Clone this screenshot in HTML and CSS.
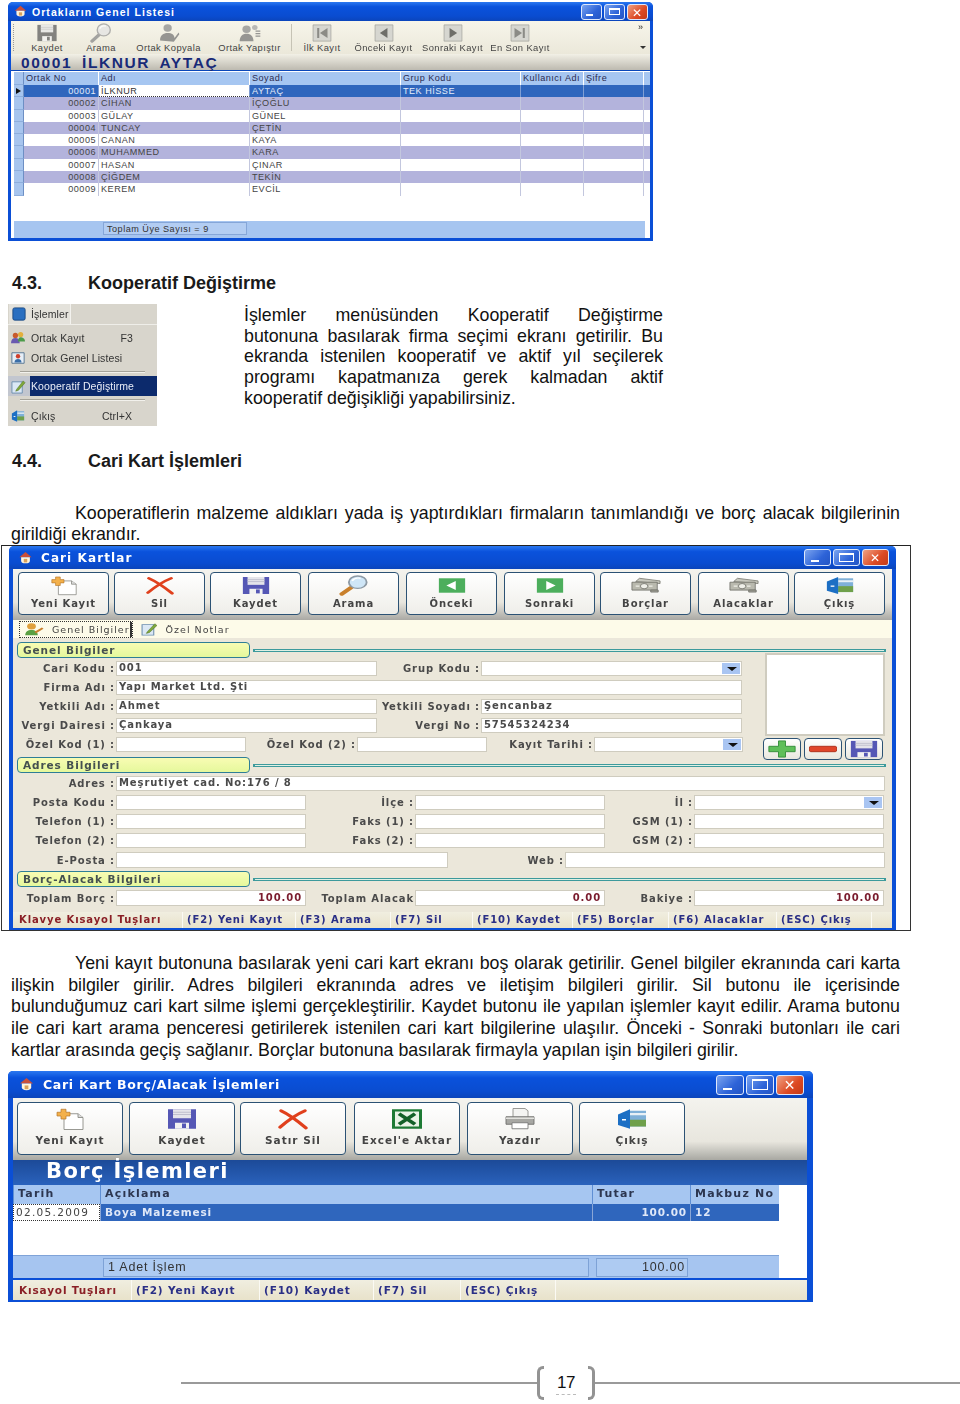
FILE: index.html
```html
<!DOCTYPE html>
<html lang="tr">
<head>
<meta charset="utf-8">
<title>Kooperatif</title>
<link rel="stylesheet" href="styles.css">
</head>
<body>
<svg class="defs" aria-hidden="true">
  <symbol id="i-save" viewBox="0 0 32 32" preserveAspectRatio="none"><path d="M2 3h28v26H2z" fill="#5557b5"/><path d="M7 3h18v12H7z" fill="#e4e4ea"/><path d="M7 7h18M7 10h18" stroke="#b9b9c9"/><path d="M9 21h14v8H9z" fill="#f2f2f2"/><path d="M16 22h4v6h-4z" fill="#5557b5"/></symbol>
  <symbol id="i-new" viewBox="0 0 32 32" preserveAspectRatio="none"><path d="M10 9h14l5 5v16H10z" fill="#fff" stroke="#8a8a84"/><path d="M24 9v5h5" fill="#ddd" stroke="#8a8a84"/><path d="M7 3h5v4h4v5h-4v4H7v-4H3V7h4z" fill="#f3b04a" stroke="#b5762a" stroke-width=".8"/></symbol>
  <symbol id="i-del" viewBox="0 0 32 32" preserveAspectRatio="none"><path d="M4 5c8 5 17 14 25 23M28 5C19 10 10 19 3 27" fill="none" stroke="#e0401c" stroke-width="3.6" stroke-linecap="round"/></symbol>
  <symbol id="i-find" viewBox="0 0 32 32" preserveAspectRatio="none"><path d="M13 19L3 29" stroke="#c9802c" stroke-width="5" stroke-linecap="round"/><circle cx="20" cy="11" r="9.5" fill="#cfe6f7" stroke="#8e9aa5" stroke-width="2"/><path d="M14 9c2-4 6-5 9-4" fill="none" stroke="#fff" stroke-width="2"/></symbol>
  <symbol id="i-prev" viewBox="0 0 32 32" preserveAspectRatio="none"><path d="M2 5h28v22H2z" fill="#4cae5c"/><path d="M20 9v14l-10-7z" fill="#fff"/></symbol>
  <symbol id="i-next" viewBox="0 0 32 32" preserveAspectRatio="none"><path d="M2 5h28v22H2z" fill="#4cae5c"/><path d="M12 9v14l10-7z" fill="#fff"/></symbol>
  <symbol id="i-money" viewBox="0 0 32 32" preserveAspectRatio="none"><path d="M5 10L9 5l22 4v4z" fill="#c9c9bf" stroke="#77776f"/><path d="M1 11h27v12H1z" fill="#b9b9ae" stroke="#6c6c64"/><circle cx="14" cy="17" r="4" fill="#efefe8" stroke="#6c6c64"/><path d="M5 17h4M19 17h4" stroke="#efefe8" stroke-width="2"/><path d="M21 23h8v3h-8z" fill="#a4a49a" stroke="#6c6c64"/></symbol>
  <symbol id="i-exit" viewBox="0 0 32 32" preserveAspectRatio="none"><path d="M14 5h16v21H14z" fill="#7fb0d8"/><path d="M14 17h16v9H14z" fill="#6fa04a"/><path d="M14 8h16v3H14z" fill="#e8f0f6"/><path d="M2 10l12-7v26L2 24z" fill="#1c6fc4"/><path d="M6 16h4v2H6z" fill="#fff"/></symbol>
  <symbol id="i-xls" viewBox="0 0 32 32" preserveAspectRatio="none"><path d="M1 3h30v26H1z" fill="#1d7a34"/><path d="M4 6h24v20H4z" fill="#e9f3e6"/><path d="M8 9l16 14M24 9L8 23" stroke="#136128" stroke-width="4"/></symbol>
  <symbol id="i-print" viewBox="0 0 32 32" preserveAspectRatio="none"><path d="M9 2h12l3 3v9H9z" fill="#f4f4f2" stroke="#8c8c88"/><path d="M2 13h28v10H2z" fill="#a7a7a3" stroke="#6d6d69"/><path d="M2 15h28" stroke="#e2e2de" stroke-width="2"/><path d="M8 21h16v8H8z" fill="#fff" stroke="#777"/></symbol>
  <symbol id="i-home" viewBox="0 0 16 16"><path d="M8 1l7 6H1z" fill="#c94f3a"/><path d="M3 7h10v4a5 3 0 0 1-10 0z" fill="#fff4dc"/><path d="M6 9h4v4H6z" fill="#d9a15a"/></symbol>
  <symbol id="i-plus" viewBox="0 0 32 20" preserveAspectRatio="none"><path d="M12 1h8v6h11v6H20v6h-8v-6H1V7h11z" fill="#5fbf5a" stroke="#2f8a36"/></symbol>
  <symbol id="i-minus" viewBox="0 0 32 20" preserveAspectRatio="none"><path d="M2 7h28a2 3 0 0 1 0 6H2a2 3 0 0 1 0-6z" fill="#e0452a" stroke="#a82a16"/></symbol>
  <symbol id="i-person" viewBox="0 0 32 32" preserveAspectRatio="none"><circle cx="14" cy="8" r="6" fill="#8c8c84"/><path d="M3 28c0-9 5-12 11-12s10 3 10 8l6-9 1 3-8 12z" fill="#77776f"/></symbol>
  <symbol id="i-persons" viewBox="0 0 32 32" preserveAspectRatio="none"><circle cx="11" cy="10" r="6" fill="#8c8c84"/><path d="M1 29c0-8 4-12 10-12s10 4 10 12z" fill="#77776f"/><circle cx="23" cy="7" r="4" fill="#a4a49c"/><path d="M24 13h7M24 17h7M24 21h7" stroke="#77776f" stroke-width="2"/></symbol>
  <symbol id="i-first" viewBox="0 0 32 32" preserveAspectRatio="none"><path d="M3 3h26v26H3z" fill="#d6d6d0" stroke="#9c9c96"/><path d="M9 8h3v16H9zM24 8v16L13 16z" fill="#8b8b86"/></symbol>
  <symbol id="i-back" viewBox="0 0 32 32" preserveAspectRatio="none"><path d="M3 3h26v26H3z" fill="#d6d6d0" stroke="#9c9c96"/><path d="M21 8v16L10 16z" fill="#6e6e69"/></symbol>
  <symbol id="i-fwd" viewBox="0 0 32 32" preserveAspectRatio="none"><path d="M3 3h26v26H3z" fill="#d6d6d0" stroke="#9c9c96"/><path d="M11 8v16l11-8z" fill="#6e6e69"/></symbol>
  <symbol id="i-last" viewBox="0 0 32 32" preserveAspectRatio="none"><path d="M3 3h26v26H3z" fill="#d6d6d0" stroke="#9c9c96"/><path d="M20 8h3v16h-3zM8 8v16l11-8z" fill="#8b8b86"/></symbol>
  <symbol id="i-module" viewBox="0 0 16 16"><rect x="1" y="1" width="14" height="14" rx="2" fill="#2a6fc0" stroke="#17467f"/></symbol>
  <symbol id="i-card" viewBox="0 0 16 16"><path d="M1 2h14v12H1z" fill="#e6eef6" stroke="#4d6e8e"/><circle cx="8" cy="6" r="2.5" fill="#d0402c"/><path d="M4 13c0-3 2-4 4-4s4 1 4 4z" fill="#3a6ea8"/></symbol>
  <symbol id="i-people" viewBox="0 0 16 16"><circle cx="5" cy="5" r="3" fill="#c95a2c"/><path d="M0 14c0-4 2-6 5-6s5 2 5 6z" fill="#6a5ab0"/><circle cx="11" cy="4" r="3" fill="#e3b03c"/><path d="M8 12c0-3 1-5 3-5s5 1 5 5z" fill="#4c9c4a"/></symbol>
  <symbol id="i-note" viewBox="0 0 16 16" preserveAspectRatio="none"><path d="M1 3h11v12H1z" fill="#dbe8f5" stroke="#6d8fb0"/><path d="M6 11l7-9 2 2-7 8-3 1z" fill="#7fa83a" stroke="#4a6a1e" stroke-width=".5"/></symbol>
  <symbol id="i-user" viewBox="0 0 16 16" preserveAspectRatio="none"><circle cx="6" cy="5" r="3.5" fill="#e0a03c"/><path d="M1 15c0-4 2-6 5-6s5 2 5 6z" fill="#5aa043"/><path d="M9 12l6-5" stroke="#c9802c" stroke-width="2"/></symbol>
</svg>

<main class="page">
  <section class="win w1 soft">
    <header class="title t1">
      <svg class="ti"><use href="#i-home"/></svg><span class="title-text">Ortakların Genel Listesi</span>
      <div class="caps"><span class="cap cap-min"></span><span class="cap cap-max"></span><span class="cap cap-x"></span></div>
    </header>
    <div class="w1-tools">
      <div class="grip"></div>
      <div class="tool tw54"><svg class="dis"><use href="#i-save"/></svg><span>Kaydet</span></div>
      <div class="tool tw54"><svg class="dis"><use href="#i-find"/></svg><span>Arama</span></div>
      <div class="tool tw80"><svg class="dis"><use href="#i-person"/></svg><span>Ortak Kopyala</span></div>
      <div class="tool tw80"><svg class="dis"><use href="#i-persons"/></svg><span>Ortak Yapıştır</span></div>
      <div class="sep"></div>
      <div class="tool tw54"><svg><use href="#i-first"/></svg><span>İlk Kayıt</span></div>
      <div class="tool tw68"><svg><use href="#i-back"/></svg><span>Önceki Kayıt</span></div>
      <div class="tool tw70"><svg><use href="#i-fwd"/></svg><span>Sonraki Kayıt</span></div>
      <div class="tool tw66"><svg><use href="#i-last"/></svg><span>En Son Kayıt</span></div>
      <div class="chev">»<i></i></div>
    </div>
    <div class="w1-name">00001 İLKNUR AYTAÇ</div>
    <div class="w1-grid">
      <div class="gr gh"><b class="ind hd"></b><b>Ortak No</b><b>Adı</b><b>Soyadı</b><b>Grup Kodu</b><b>Kullanıcı Adı</b><b>Şifre</b></div>
      <div class="gr sel"><b class="ind cur"></b><b class="num">00001</b><b class="focus">İLKNUR</b><b>AYTAÇ</b><b>TEK HİSSE</b><b></b><b></b></div>
      <div class="gr lav"><b class="ind"></b><b class="num">00002</b><b>CİHAN</b><b>İÇOĞLU</b><b></b><b></b><b></b></div>
      <div class="gr"><b class="ind"></b><b class="num">00003</b><b>GÜLAY</b><b>GÜNEL</b><b></b><b></b><b></b></div>
      <div class="gr lav"><b class="ind"></b><b class="num">00004</b><b>TUNCAY</b><b>ÇETİN</b><b></b><b></b><b></b></div>
      <div class="gr"><b class="ind"></b><b class="num">00005</b><b>CANAN</b><b>KAYA</b><b></b><b></b><b></b></div>
      <div class="gr lav"><b class="ind"></b><b class="num">00006</b><b>MUHAMMED</b><b>KARA</b><b></b><b></b><b></b></div>
      <div class="gr"><b class="ind"></b><b class="num">00007</b><b>HASAN</b><b>ÇINAR</b><b></b><b></b><b></b></div>
      <div class="gr lav"><b class="ind"></b><b class="num">00008</b><b>ÇİĞDEM</b><b>TEKİN</b><b></b><b></b><b></b></div>
      <div class="gr"><b class="ind"></b><b class="num">00009</b><b>KEREM</b><b>EVCİL</b><b></b><b></b><b></b></div>
    </div>
    <div class="w1-foot"><span class="w1-total">Toplam Üye Sayısı = 9</span></div>
  </section>

  <h2 class="head head-a"><span>4.3.</span>Kooperatif Değiştirme</h2>

  <div class="intro">
    <nav class="menu soft">
      <div class="m-top"><span class="m-box"><svg><use href="#i-module"/></svg>İşlemler</span></div>
      <div class="m-item"><svg><use href="#i-people"/></svg><span>Ortak Kayıt</span><em>F3</em></div>
      <div class="m-item"><svg><use href="#i-card"/></svg><span>Ortak Genel Listesi</span></div>
      <hr>
      <div class="m-item m-on"><svg><use href="#i-note"/></svg><span>Kooperatif Değiştirme</span></div>
      <hr>
      <div class="m-item"><svg><use href="#i-exit"/></svg><span>Çıkış</span><em>Ctrl+X</em></div>
    </nav>
    <p class="p-intro">
      <span class="ln">İşlemler menüsünden Kooperatif Değiştirme</span>
      <span class="ln">butonuna basılarak firma seçimi ekranı getirilir. Bu</span>
      <span class="ln">ekranda istenilen kooperatif ve aktif yıl seçilerek</span>
      <span class="ln">programı kapatmanıza gerek kalmadan aktif</span>
      <span class="ln last">kooperatif değişikliği yapabilirsiniz.</span>
    </p>
  </div>

  <h2 class="head head-b"><span>4.4.</span>Cari Kart İşlemleri</h2>

  <p class="para p-two">
    <span class="ln first">Kooperatiflerin malzeme aldıkları yada iş yaptırdıkları firmaların tanımlandığı ve borç alacak bilgilerinin</span>
    <span class="ln last">girildiği ekrandır.</span>
  </p>

  <div class="frame">
    <section class="win w2 soft">
      <header class="title t2">
        <svg class="ti"><use href="#i-home"/></svg><span class="title-text">Cari Kartlar</span>
        <div class="caps"><span class="cap cap-min"></span><span class="cap cap-max"></span><span class="cap cap-x"></span></div>
      </header>
      <div class="bar b2">
        <div class="btn"><svg><use href="#i-new"/></svg><span>Yeni Kayıt</span></div>
        <div class="btn"><svg><use href="#i-del"/></svg><span>Sil</span></div>
        <div class="btn"><svg><use href="#i-save"/></svg><span>Kaydet</span></div>
        <div class="btn gl"><svg><use href="#i-find"/></svg><span>Arama</span></div>
        <div class="btn gl"><svg><use href="#i-prev"/></svg><span>Önceki</span></div>
        <div class="btn gl"><svg><use href="#i-next"/></svg><span>Sonraki</span></div>
        <div class="btn"><svg><use href="#i-money"/></svg><span>Borçlar</span></div>
        <div class="btn gl"><svg><use href="#i-money"/></svg><span>Alacaklar</span></div>
        <div class="btn"><svg><use href="#i-exit"/></svg><span>Çıkış</span></div>
      </div>
      <div class="tabs">
        <span class="tab tab-on"><svg><use href="#i-user"/></svg>Genel Bilgiler</span>
        <span class="tab"><svg><use href="#i-note"/></svg>Özel Notlar</span>
      </div>
      <div class="form">
        <div class="sect"><span class="pill">Genel Bilgiler</span><i class="rule"></i></div>
        <div class="top">
          <div class="left">
            <div class="row"><label class="l98">Cari Kodu :</label><span class="in i261">001</span><label class="l103">Grup Kodu :</label><span class="in i261 dd"></span></div>
            <div class="row"><label class="l98">Firma Adı :</label><span class="in i626">Yapı Market Ltd. Şti</span></div>
            <div class="row"><label class="l98">Yetkili Adı :</label><span class="in i261">Ahmet</span><label class="l103">Yetkili Soyadı :</label><span class="in i261">Şencanbaz</span></div>
            <div class="row"><label class="l98">Vergi Dairesi :</label><span class="in i261">Çankaya</span><label class="l103">Vergi No :</label><span class="in i261">57545324234</span></div>
            <div class="row"><label class="l98">Özel Kod (1) :</label><span class="in i130"></span><label class="l106">Özel Kod (2) :</label><span class="in i130"></span><label class="l106b">Kayıt Tarihi :</label><span class="in i149 dd"></span></div>
          </div>
          <div class="right">
            <div class="pic"></div>
            <div class="mini">
              <span class="mb"><svg><use href="#i-plus"/></svg></span>
              <span class="mb"><svg><use href="#i-minus"/></svg></span>
              <span class="mb"><svg class="mdisk"><use href="#i-save"/></svg></span>
            </div>
          </div>
        </div>
        <div class="sect"><span class="pill">Adres Bilgileri</span><i class="rule"></i></div>
        <div class="addr">
          <div class="row"><label class="l98">Adres :</label><span class="in i769">Meşrutiyet cad. No:176 / 8</span></div>
          <div class="row"><label class="l98">Posta Kodu :</label><span class="in i190"></span><label class="l109">İlçe :</label><span class="in i190"></span><label class="l89">İl :</label><span class="in i190 dd"></span></div>
          <div class="row"><label class="l98">Telefon (1) :</label><span class="in i190"></span><label class="l109">Faks (1) :</label><span class="in i190"></span><label class="l89">GSM (1) :</label><span class="in i190"></span></div>
          <div class="row"><label class="l98">Telefon (2) :</label><span class="in i190"></span><label class="l109">Faks (2) :</label><span class="in i190"></span><label class="l89">GSM (2) :</label><span class="in i190"></span></div>
          <div class="row"><label class="l98">E-Posta :</label><span class="in i332"></span><label class="l117">Web :</label><span class="in i320"></span></div>
        </div>
        <div class="sect sect-c"><span class="pill">Borç-Alacak Bilgileri</span><i class="rule"></i></div>
        <div class="row row-t"><label class="l98">Toplam Borç :</label><span class="in i190 amt">100.00</span><label class="l109">Toplam Alacak</label><span class="in i190 amt">0.00</span><label class="l89">Bakiye :</label><span class="in i190 amt">100.00</span></div>
      </div>
      <footer class="status s2">
        <span class="key s168">Klavye Kısayol Tuşları</span>
        <span class="s113">(F2) Yeni Kayıt</span>
        <span class="s95">(F3) Arama</span>
        <span class="s82">(F7) Sil</span>
        <span class="s100">(F10) Kaydet</span>
        <span class="s96">(F5) Borçlar</span>
        <span class="s108">(F6) Alacaklar</span>
        <span class="s95">(ESC) Çıkış</span>
      </footer>
    </section>
  </div>

  <p class="para p-three">
    <span class="ln first">Yeni kayıt butonuna basılarak yeni cari kart ekranı boş olarak getirilir. Genel bilgiler ekranında cari karta</span>
    <span class="ln">ilişkin bilgiler girilir. Adres bilgileri ekranında adres ve iletişim bilgileri girilir. Sil butonu ile içerisinde</span>
    <span class="ln">bulunduğumuz cari kart silme işlemi gerçekleştirilir. Kaydet butonu ile yapılan işlemler kayıt edilir. Arama butonu</span>
    <span class="ln">ile cari kart arama penceresi getirilerek istenilen cari kart bilgilerine ulaşılır. Önceki - Sonraki butonları ile cari</span>
    <span class="ln last">kartlar arasında geçiş sağlanır. Borçlar butonuna basılarak firmayla yapılan işin bilgileri girilir.</span>
  </p>

  <section class="win w3 soft">
    <header class="title t3">
      <svg class="ti"><use href="#i-home"/></svg><span class="title-text">Cari Kart Borç/Alacak İşlemleri</span>
      <div class="caps"><span class="cap cap-min"></span><span class="cap cap-max"></span><span class="cap cap-x"></span></div>
    </header>
    <div class="bar b3">
      <div class="btn"><svg><use href="#i-new"/></svg><span>Yeni Kayıt</span></div>
      <div class="btn"><svg><use href="#i-save"/></svg><span>Kaydet</span></div>
      <div class="btn"><svg><use href="#i-del"/></svg><span>Satır Sil</span></div>
      <div class="btn"><svg><use href="#i-xls"/></svg><span>Excel'e Aktar</span></div>
      <div class="btn"><svg><use href="#i-print"/></svg><span>Yazdır</span></div>
      <div class="btn"><svg><use href="#i-exit"/></svg><span>Çıkış</span></div>
    </div>
    <div class="band">Borç İşlemleri</div>
    <div class="w3-grid">
      <div class="g3 g3-h"><b>Tarih</b><b>Açıklama</b><b>Tutar</b><b>Makbuz No</b></div>
      <div class="g3 g3-s"><b class="dot">02.05.2009</b><b>Boya Malzemesi</b><b class="num">100.00</b><b>12</b></div>
    </div>
    <div class="w3-foot">
      <div class="w3-sum"><span class="box b-486">1 Adet İşlem</span><span class="box b-92">100.00</span></div>
    </div>
    <footer class="status s3">
      <span class="key s117">Kısayol Tuşları</span>
      <span class="s128">(F2) Yeni Kayıt</span>
      <span class="s114">(F10) Kaydet</span>
      <span class="s87">(F7) Sil</span>
      <span class="s95">(ESC) Çıkış</span>
    </footer>
  </section>

  <footer class="pager">
    <i class="pline"></i>
    <span class="brk brk-l"></span>
    <span class="pnum">17</span>
    <span class="brk brk-r"></span>
    <i class="pline pline-r"></i>
  </footer>
</main>
</body>
</html>
```
FILE: styles.css
```css
* { box-sizing: border-box; }
html, body { margin: 0; padding: 0; background: #fff; }
body { font-family: "Liberation Sans", Arial, sans-serif; color: #111; }
.defs { position: absolute; width: 0; height: 0; }
.page { width: 960px; height: 1404px; overflow: hidden; }
.soft { filter: blur(0.4px); }

/* document text */
.head { margin: 0; font-size: 18px; line-height: 20px; font-weight: bold; color: #1a1a1a; padding-left: 12px; display: flex; }
.head span { width: 76px; }
.head-a { margin-top: 32px; }
.head-b { margin-top: 25px; }
.intro { display: flex; margin-top: 11px; height: 122px; padding-left: 8px; }
.p-intro { margin: 1px 0 0 87px; width: 419px; font-size: 17.8px; line-height: 20.7px; }
.para { margin: 0; font-size: 17.8px; margin-left: 11px; width: 889px; }
.ln { display: block; text-align: justify; text-align-last: justify; }
.ln.last { text-align-last: left; }
.ln.first { padding-left: 64px; }
.p-two { margin-top: 32px; line-height: 21px; }
.p-three { margin-top: 22px; line-height: 21.7px; }

/* shared window */
.win { background: #0b4fd6; border-radius: 5px 5px 0 0; display: flex; flex-direction: column; }
.w2, .w3 { font-family: "DejaVu Sans", sans-serif; }
.title { display: flex; align-items: center; color: #fff; font-weight: bold; background: linear-gradient(#2b78f0, #0a52dc 25%, #0a4cd0 75%, #0b45bb); border-radius: 5px 5px 0 0; flex: none; }
.ti { flex: none; }
.caps { margin-left: auto; display: flex; }
.cap { display: block; border: 1px solid #dfe8fb; border-radius: 3px; background: linear-gradient(135deg, #7ba4ef, #2d63d8 60%, #2455c4); position: relative; }
.cap-x { background: linear-gradient(135deg, #f0a283, #dd4a24 60%, #c43a18); }
.cap-min::after { content: ""; position: absolute; left: 22%; bottom: 20%; width: 35%; height: 2px; background: #fff; }
.cap-max::after { content: ""; position: absolute; left: 20%; right: 20%; top: 22%; bottom: 22%; border: 1px solid #fff; border-top-width: 2px; }
.cap-x::after { content: "✕"; position: absolute; inset: 0; color: #fff; text-align: center; font: bold 12px/16px "DejaVu Sans", sans-serif; }

/* window 1 */
.w1 { width: 645px; height: 239px; margin: 2px 0 0 8px; padding: 0 3px 3px; }
.t1 { height: 19px; margin: 0 -3px; padding: 0 5px 0 6px; font-size: 10.5px; letter-spacing: 1.05px; }
.t1 .ti { width: 13px; height: 13px; margin-right: 5px; }
.t1 .cap { width: 21px; height: 16px; margin-left: 2px; }
.w1-tools { height: 33px; flex: none; background: linear-gradient(#f7f5ea, #ebe8da); display: flex; align-items: stretch; padding-left: 2px; position: relative; }
.grip { width: 3px; margin: 3px 4px 3px 0; border-left: 1px dotted #999; }
.tool { flex: none; display: flex; flex-direction: column; align-items: center; font-size: 9.4px; letter-spacing: .4px; color: #444; padding-top: 2px; white-space: nowrap; }
.tool svg { width: 22px; height: 20px; flex: none; }
.tool span { margin-top: -1px; }
.tool .dis { filter: grayscale(1) opacity(.75); }
.tw54 { width: 54px; }
.tw66 { width: 66px; }
.tw68 { width: 69px; }
.tw70 { width: 69px; }
.tw80 { width: 81px; }
.sep { width: 1px; margin: 3px 3px 3px 1px; background: #c6c3b5; }
.chev { margin-left: auto; width: 12px; font-size: 9px; line-height: 12px; color: #222; position: relative; }
.chev i { position: absolute; bottom: 5px; left: 2px; border: 3px solid transparent; border-top-color: #333; border-bottom: 0; }
.w1-name { height: 17px; flex: none; background: linear-gradient(#f2f0e6, #bdbab0); border-bottom: 1px solid #0a47b9; color: #182a78; font-weight: bold; font-size: 15.5px; line-height: 17px; padding-left: 10px; letter-spacing: 1.6px; word-spacing: 4px; white-space: pre; }
.w1-grid { height: 150px; flex: none; background: #fff; padding: 1px 0 0 3px; }
.gr { display: grid; grid-template-columns: 10px 75px 151px 151px 120px 63px 60px; height: 12.3px; font-size: 9.1px; line-height: 12px; letter-spacing: .5px; color: #444; background: #fff; }
.gr b { font-weight: normal; padding-left: 2px; border-right: 1px solid #c3c7de; white-space: nowrap; overflow: hidden; }
.gr .ind { background: #a7c5ee; padding: 0; border-right: 1px solid #6d8fc4; border-bottom: 1px solid #8eaedc; }
.gr .num { text-align: right; padding-right: 2px; }
.gh { background: #a6c6f1; height: 13px; line-height: 13px; color: #2b2b50; }
.gh b { border-right: 1px solid #fff; }
.lav { background: #b3b3dc; }
.sel { background: #2f66bd; color: #e4ecfa; }
.sel b { border-right-color: #7f9ed4; }
.gr .focus { background: #fff; color: #333; border-bottom: 1px dotted #333; }
.cur { position: relative; }
.cur::after { content: ""; position: absolute; left: 2px; top: 3px; border: 3.5px solid transparent; border-left: 5px solid #111; border-right: 0; }
.w1-foot { height: 17px; flex: none; background: #a6c5f0; margin-left: 3px; margin-right: 5px; padding: 1px 0 0 89px; box-shadow: 5px 0 0 #fff, -3px 0 0 #fff; }
.w1-total { display: block; width: 144px; height: 13px; border: 1px solid #85a6d8; background: #b3cdf2; font-size: 9.1px; line-height: 12px; letter-spacing: .5px; padding-left: 3px; color: #333; }

/* menu */
.menu { width: 149px; height: 122px; background: #d8d5cc; font-size: 10.5px; letter-spacing: .1px; color: #333; }
.menu svg { width: 14px; height: 14px; flex: none; }
.m-top { height: 21px; border-bottom: 1px solid #efeee9; padding-left: 1px; margin-bottom: 3px; }
.m-box { display: flex; align-items: center; gap: 5px; width: 62px; height: 20px; background: #e4e2db; padding-left: 3px; border-right: 1px solid #f3f2ee; }
.m-item { display: flex; align-items: center; height: 20px; padding-left: 3px; gap: 6px; }
.m-item em { font-style: normal; margin-left: auto; padding-right: 24px; }
.menu hr { margin: 3px 12px; border: 0; border-top: 1px solid #a5a39a; border-bottom: 1px solid #f2f1ec; height: 2px; }
.menu hr:last-of-type { margin-bottom: 5px; }
.m-item:last-child em { padding-right: 25px; }
.m-on { padding-left: 0; gap: 5px; background: linear-gradient(90deg, #c2c6cf 0 22px, #0c2a6c 22px); color: #e8ecf6; }
.m-on svg { margin-left: 3px; width: 15px; height: 15px; }

/* frame and window 2 */
.frame { width: 910px; height: 386px; margin-left: 1px; border: 1px solid #333; border-top-color: #222; padding-left: 7px; background: #fff; }
.w2 { width: 887px; height: 384px; padding: 0 4px 3px; }
.t2 { height: 23px; margin: 0 -4px; padding: 0 7px 0 9px; font-size: 12px; letter-spacing: 1.1px; }
.t2 .ti { width: 15px; height: 14px; margin-right: 8px; }
.t2 .cap { width: 27px; height: 17px; margin-left: 2px; }
.bar { display: flex; flex: none; background: linear-gradient(#f4f3ee, #e8e6de 65%, #aaa9a4); }
.b2 { height: 51px; padding: 3px 0 0 5px; gap: 5px; }
.btn { flex: none; display: flex; flex-direction: column; align-items: center; border: 1px solid #2c5274; border-radius: 4px; background: linear-gradient(#fff, #efeee9); color: #444; font-weight: bold; white-space: nowrap; }
.b2 .btn { width: 91px; height: 43px; font-size: 10px; letter-spacing: .9px; padding-top: 2px; line-height: 13px; }
.b2 .btn svg { width: 30px; height: 21px; margin-bottom: 1px; }
.b2 .gl { margin-left: 2px; }
.tabs { height: 18px; flex: none; background: #fdfbe9; display: flex; align-items: center; padding-left: 7px; font-size: 9.5px; letter-spacing: 1px; color: #444; gap: 9px; white-space: nowrap; }
.tab { display: flex; align-items: center; gap: 8px; height: 15px; }
.tab svg { width: 17px; height: 14px; }
.tab-on { outline: 1px dotted #333; border-right: 2px solid #333; padding-left: 4px; }
.tab-on svg { width: 20px; }
.form { height: 274px; flex: none; background: #ebe7da; padding: 4px 6px 0 4px; }
.sect { display: flex; align-items: center; height: 16px; }
.pill { flex: none; display: block; width: 233px; height: 16px; background: linear-gradient(#f8fcb3, #e5f89c); border: 1px solid #2e7e96; border-radius: 4px; font-size: 10.5px; font-weight: bold; letter-spacing: .9px; line-height: 14px; padding-left: 5px; color: #445050; white-space: nowrap; }
.rule { flex: 1; height: 3px; margin-left: 3px; background: #dff0e4; border: 1px solid #3d9a9c; border-left-width: 2px; border-right-width: 2px; }
.top { height: 99px; display: flex; padding-top: 3px; }
.left { width: 726px; }
.right { margin-left: 20px; margin-top: -8px; width: 121px; }
.row { display: flex; height: 15px; margin-bottom: 4px; align-items: center; }
label { flex: none; text-align: right; font-size: 10px; font-weight: bold; letter-spacing: .9px; color: #4a4a4a; white-space: nowrap; padding-right: 1px; line-height: 13px; }
.in { flex: none; display: block; height: 15px; background: #fff; border: 1px solid #cfccbf; font-size: 10px; font-weight: bold; letter-spacing: .9px; line-height: 12px; padding-left: 2px; color: #4a4a4a; position: relative; white-space: nowrap; }
.dd::after { content: ""; position: absolute; right: 1px; top: 1px; bottom: 1px; width: 18px; background: #a9c5f2; }
.dd::before { content: ""; position: absolute; z-index: 1; right: 4px; top: 5px; border: 5px solid transparent; border-top: 4px solid #111; border-bottom: 0; }
.l98 { width: 99px; }
.l103 { width: 104px; }
.l106 { width: 111px; }
.l106b { width: 107px; }
.l109 { width: 109px; }
.l89 { width: 89px; }
.l117 { width: 117px; }
.i130 { width: 130px; }
.i149 { width: 149px; }
.i190 { width: 190px; }
.i261 { width: 261px; }
.i320 { width: 320px; }
.i332 { width: 332px; }
.i626 { width: 626px; }
.i769 { width: 769px; }
.pic { width: 120px; height: 83px; margin-left: 2px; background: #fff; border: 2px solid #cfccbf; }
.mini { display: flex; gap: 3px; margin-top: 2px; }
.mb { flex: none; width: 38px; height: 22px; border: 1px solid #2c5274; border-radius: 4px; background: linear-gradient(#fff, #e9e7df); display: flex; align-items: center; justify-content: center; }
.mb svg { width: 28px; height: 18px; }
.mb .mdisk { width: 30px; height: 20px; }
.addr { padding-top: 3px; }
.addr .row:last-child { height: 16px; margin-bottom: 3px; }
.addr .row:last-child .in { height: 16px; }
.row-t { margin-top: 3px; height: 16px; }
.row-t .in { height: 16px; }
.amt { text-align: right; padding-right: 3px; color: #7a1c2e; line-height: 13px; }
.status { display: flex; flex: none; background: linear-gradient(#f0eee0, #e8e2ca); font-weight: bold; color: #2a2f86; white-space: nowrap; }
.status span { flex: none; border-right: 1px solid #fbfaf4; padding-left: 4px; overflow: hidden; }
.s2 { height: 16px; font-size: 10px; letter-spacing: .9px; line-height: 15px; padding-left: 2px; }
.key { color: #8a1f26; }
.s168 { width: 168px; }
.s113 { width: 113px; }
.s95 { width: 95px; }
.s82 { width: 82px; }
.s100 { width: 100px; }
.s96 { width: 96px; }
.s108 { width: 108px; }

/* window 3 */
.w3 { width: 805px; height: 231px; margin: 9.5px 0 0 8px; padding: 0 6px 2px 5px; }
.t3 { height: 27px; margin: 0 -6px 0 -5px; padding: 0 9px 0 11px; font-size: 12.5px; letter-spacing: .7px; }
.t3 .ti { width: 15px; height: 15px; margin-right: 9px; }
.t3 .cap { width: 28px; height: 20px; margin-left: 2px; }
.t3 .cap-x::after { line-height: 18px; font-size: 14px; }
.b3 { height: 62px; padding: 4px 0 0 4px; gap: 6px; background: linear-gradient(#f4f3ee, #e8e6de 70%, #a8a8a2); }
.b3 .btn { width: 106px; height: 53px; font-size: 10.5px; letter-spacing: 1px; padding-top: 4px; line-height: 13px; }
.b3 .btn svg { width: 32px; height: 24px; margin-bottom: 3px; }
.b3 .btn:nth-child(3) { margin-left: -1px; }
.b3 .btn:nth-child(4) { margin-left: 2px; }
.b3 .btn:nth-child(5) { margin-left: 1px; }
.band { height: 25px; flex: none; background: linear-gradient(#1c4a98, #2a62bc); color: #fff; font-size: 21px; font-weight: bold; letter-spacing: 1.4px; line-height: 22px; padding-left: 33px; white-space: nowrap; }
.w3-grid { height: 70px; flex: none; background: #fff; }
.g3 { display: grid; grid-template-columns: 87px 492px 98px 89px; width: 766px; font-size: 10.5px; letter-spacing: .85px; }
.g3 b { padding-left: 4px; white-space: nowrap; }
.g3-h { height: 19px; background: #a6c6f1; line-height: 18px; color: #2c3650; }
.g3-h b { font-weight: bold; border-left: 1px solid #5f8fd4; padding-left: 4px; font-size: 11px; letter-spacing: 1.2px; }
.g3-s { height: 17px; background: #2f66bd; color: #dfe8f8; line-height: 16px; }
.g3-s b { font-weight: bold; border-left: 1px solid #8aa6d6; }
.g3-s .dot { background: #fff; color: #444; font-weight: normal; letter-spacing: 1.3px; outline: 1px dotted #333; outline-offset: -1px; padding-left: 3px; border: 0; }
.g3-s .num { text-align: right; padding-right: 3px; }
.w3-foot { height: 23px; flex: none; background: #fff; }
.w3-sum { width: 766px; height: 23px; background: #a6c5f0; border-top: 1px solid #7fa3d8; padding: 2px 0 0 90px; display: flex; gap: 7px; }
.box { display: block; height: 19px; border: 1px solid #7ea2d6; background: #aecbf2; font-family: "Liberation Sans", Arial, sans-serif; font-size: 12.5px; line-height: 17px; letter-spacing: .8px; padding: 0 2px 0 4px; color: #333; }
.b-486 { width: 486px; }
.b-92 { width: 92px; text-align: right; }
.s3 { height: 20px; font-size: 10.5px; letter-spacing: .85px; line-height: 20px; margin-top: 2px; padding-left: 2px; }
.s117 { width: 117px; }
.s128 { width: 128px; }
.s114 { width: 114px; }
.s87 { width: 87px; }

/* pager */
.pager { display: flex; align-items: center; height: 34px; margin-top: 64px; padding-left: 181px; }
.pline { display: block; height: 2px; background: #9a9a9a; width: 356px; flex: none; }
.pline-r { flex: 1; width: auto; }
.brk { flex: none; width: 7px; height: 34px; border: 3px solid #939393; }
.brk-l { border-right: 0; border-radius: 6px 0 0 6px; }
.brk-r { border-left: 0; border-radius: 0 6px 6px 0; }
.pnum { flex: none; width: 44px; text-align: center; font-size: 17px; letter-spacing: -.5px; color: #111; position: relative; }
.pnum::after { content: ""; position: absolute; left: 12px; right: 12px; top: 21px; border-top: 1px dashed #bbb; }
```
